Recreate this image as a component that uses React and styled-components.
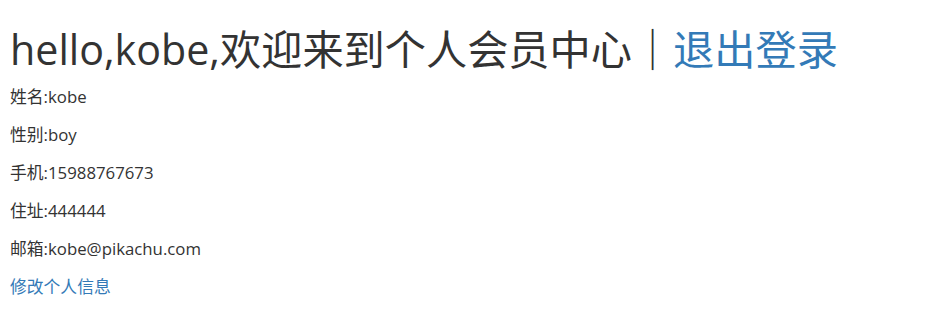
import React from "react";
import styled, { createGlobalStyle } from "styled-components";

const GlobalStyle = createGlobalStyle`
  body {
    margin: 0;
    background: #fff;
    color: #333;
    font-family: "Open Sans", "Noto Sans CJK SC", sans-serif;
    font-size: 16.8px;
  }
`;

const Page = styled.div`
  padding: 27px 10px 0;
`;

const Title = styled.h1`
  margin: 0 0 14px;
  font-size: 41.2px;
  font-weight: 400;
  line-height: 45px;
  color: #333;
  white-space: nowrap;
`;

const Link = styled.a`
  color: #337ab7;
  text-decoration: none;
  cursor: pointer;
`;

const Info = styled.p`
  margin: 0 0 16px;
  line-height: 22px;
`;

const SmallLink = styled(Link)`
  display: block;
  line-height: 22px;
`;

const user = [
  ["姓名", "kobe"],
  ["性别", "boy"],
  ["手机", "15988767673"],
  ["住址", "444444"],
  ["邮箱", "kobe@pikachu.com"],
];

const App = () => {
  return (
    <Page>
      <GlobalStyle />
      <Title>
        hello,kobe,欢迎来到个人会员中心｜<Link>退出登录</Link>
      </Title>
      {user.map(([label, value]) => (
        <Info key={label}>
          {label}:{value}
        </Info>
      ))}
      <SmallLink>修改个人信息</SmallLink>
    </Page>
  );
};

export default App;
